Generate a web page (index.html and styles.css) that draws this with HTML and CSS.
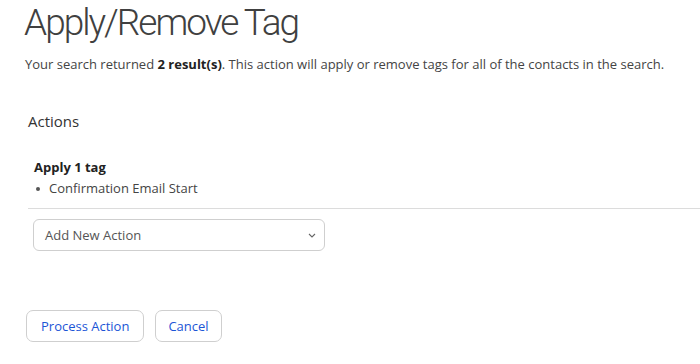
FILE: index.html
```html
<!DOCTYPE html>
<html lang="en">
<head>
    <meta charset="UTF-8">
    <meta name="viewport" content="width=device-width, initial-scale=1.0">
    <title>Apply/Remove Tag</title>
    <link rel="stylesheet" href="styles.css">
</head>
<body>
    <div class="page">
        <h1 class="title">Apply/Remove Tag</h1>
        <p class="intro">Your search returned <b>2 result(s)</b>. This action will apply or remove tags for all of the contacts in the search.</p>

        <div class="actions">
            <h2 class="actions-head">Actions</h2>
            <div class="action">
                <div class="action-name">Apply 1 tag</div>
                <ul class="tag-list">
                    <li>Confirmation Email Start</li>
                </ul>
            </div>
            <div class="add-row">
                <div class="select">
                    <span>Add New Action</span>
                    <svg class="chev" width="8" height="5" viewBox="0 0 8 5"><path d="M1 1l3 3 3-3" fill="none" stroke="#666" stroke-width="1.1"/></svg>
                </div>
            </div>
        </div>

        <div class="buttons">
            <button class="btn">Process Action</button>
            <button class="btn btn-cancel">Cancel</button>
        </div>
    </div>
</body>
</html>
```

FILE: styles.css
```css
*{
    padding: 0;
    margin: 0;
    box-sizing: border-box;
}
body{
    font-family: "Open Sans", "Liberation Sans", sans-serif;
    color: #444;
    background: #fff;
}
.page{
    padding: 0 0 0 25px;
}
.title{
    font-family: Roboto, "Liberation Sans", sans-serif;
    font-size: 37px;
    font-weight: 300;
    letter-spacing: -2px;
    color: #404040;
    line-height: 46px;
    margin-left: -1px;
}
.intro{
    font-size: 13px;
    line-height: 18px;
    margin-top: 9px;
    color: #444;
}
.intro b{
    font-weight: 700;
    color: #222;
}
.actions{
    margin: 38px 0 0 3px;
}
.actions-head{
    font-size: 15px;
    font-weight: 400;
    color: #333;
    line-height: 20px;
}
.action{
    padding: 0 0 11px 6px;
    margin-top: 27px;
    border-bottom: 1px solid #dcdcdc;
}
.action-name{
    font-size: 13px;
    font-weight: 700;
    color: #222;
    line-height: 18px;
}
.tag-list{
    list-style: none;
    font-size: 13px;
    line-height: 18px;
    margin-top: 3px;
    color: #444;
}
.tag-list li{
    display: flex;
    align-items: center;
}
.tag-list li::before{
    content: "";
    width: 4px;
    height: 4px;
    border-radius: 50%;
    background: #555;
    margin: 1px 9px 0 2px;
}
.add-row{
    padding: 10px 0 0 5px;
}
.select{
    display: flex;
    align-items: center;
    justify-content: space-between;
    width: 292px;
    height: 32px;
    padding: 0 8px 0 11px;
    border: 1px solid #cfcfcf;
    border-radius: 6px;
    font-size: 13px;
    color: #555;
}
.buttons{
    display: flex;
    gap: 11px;
    margin: 59px 0 0 1px;
}
.btn{
    font-family: "Open Sans", "Liberation Sans", sans-serif;
    font-size: 13px;
    color: #1b55d6;
    background: #fff;
    border: 1px solid #cfcfcf;
    border-radius: 7px;
    height: 32px;
    padding: 0 14px;
}
.btn-cancel{
    padding: 0 12px;
}
```
